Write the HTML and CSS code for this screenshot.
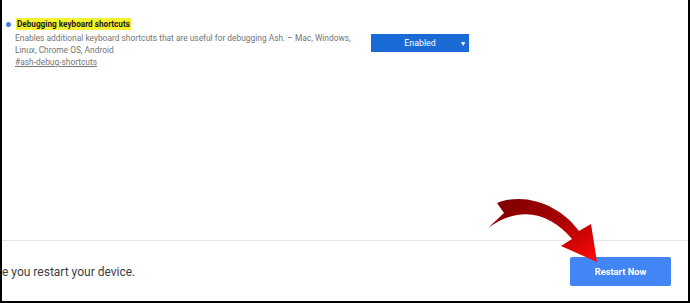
FILE: index.html
```html
<!DOCTYPE html>
<html lang="en">
<head>
    <meta charset="UTF-8">
    <meta name="viewport" content="width=device-width, initial-scale=1.0">
    <title>Flags - Restart</title>
    <link rel="stylesheet" href="styles.css">
</head>
<body>

    <div class="frame">
        <div class="flag">
            <div class="flag-info">
                <h3 class="flag-name"><span class="dot"></span><mark>Debugging keyboard shortcuts</mark></h3>
                <p class="flag-desc">Enables additional keyboard shortcuts that are useful for debugging Ash. – Mac, Windows, Linux, Chrome OS, Android</p>
                <a class="flag-link" href="#ash-debug-shortcuts">#ash-debug-shortcuts</a>
            </div>
            <div class="flag-select">
                <span>Enabled</span>
                <span class="caret">&#9662;</span>
            </div>
        </div>

        <div class="footer">
            <p class="footer-text">e you restart your device.</p>
            <button class="restart-btn">Restart Now</button>
        </div>

        <!-- annotation arrow drawn over the page -->
        <svg class="arrow" width="130" height="75" viewBox="0 0 130 75">
            <defs>
                <linearGradient id="red" x1="0" y1="0" x2="1" y2="1">
                    <stop offset="0" stop-color="#780000"/>
                    <stop offset="0.5" stop-color="#a80000"/>
                    <stop offset="1" stop-color="#ff0a0a"/>
                </linearGradient>
            </defs>
            <path d="M15 8 C 45 -4, 80 12, 97 36 L 109 29 L 115 67 L 79 51 L 90 44 C 70 20, 40 8, 6 33 L 22 18 Z" fill="url(#red)"/>
        </svg>
    </div>

</body>
</html>
```

FILE: styles.css
```css
* {
    box-sizing: border-box;
}
body {
    margin: 0;
    font-family: Roboto, "Liberation Sans", Arial, sans-serif;
    background: #ffffff;
}
.frame {
    position: relative;
    width: 690px;
    height: 303px;
    display: flex;
    flex-direction: column;
    border-left: 2px solid #000;
    border-right: 2px solid #000;
    border-bottom: 2px solid #000;
    overflow: hidden;
}
.flag {
    display: flex;
    align-items: flex-start;
    padding: 18px 0 0 4px;
    flex: 1;
}
.flag-info {
    width: 360px;
}
.flag-name {
    margin: 0;
    font-size: 8.2px;
    font-weight: bold;
    color: #202124;
    display: flex;
    align-items: center;
    height: 12px;
}
.dot {
    width: 5px;
    height: 5px;
    border-radius: 50%;
    background: #4a7fe0;
    margin-right: 5px;
}
mark {
    background: #f4f22e;
    color: #202124;
    padding: 1px 1px;
}
.flag-desc {
    margin: 2px 0 0 9px;
    font-size: 8.4px;
    line-height: 12px;
    color: #757575;
    width: 345px;
}
.flag-link {
    display: block;
    margin-left: 9px;
    font-size: 8.4px;
    line-height: 12px;
    color: #757575;
}
.flag-select {
    margin: 16px 0 0 5px;
    width: 98px;
    height: 18px;
    background: #1b6bd6;
    color: #fff;
    font-size: 8.8px;
    display: flex;
    align-items: center;
    justify-content: center;
    position: relative;
}
.caret {
    position: absolute;
    right: 4px;
    font-size: 8px;
}
.footer {
    height: 61px;
    border-top: 1px solid #e6e6e6;
    display: flex;
    align-items: center;
    justify-content: space-between;
    padding: 0 17px 0 0;
}
.footer-text {
    margin: 2px 0 0;
    font-size: 12px;
    color: #3c4043;
}
.restart-btn {
    width: 101px;
    height: 29px;
    border: none;
    border-radius: 2px;
    background: #4285f4;
    color: #fff;
    font-family: Roboto, "Liberation Sans", Arial, sans-serif;
    font-size: 9.3px;
    font-weight: bold;
}
.arrow {
    position: absolute;
    left: 480px;
    top: 195px;
}
```
